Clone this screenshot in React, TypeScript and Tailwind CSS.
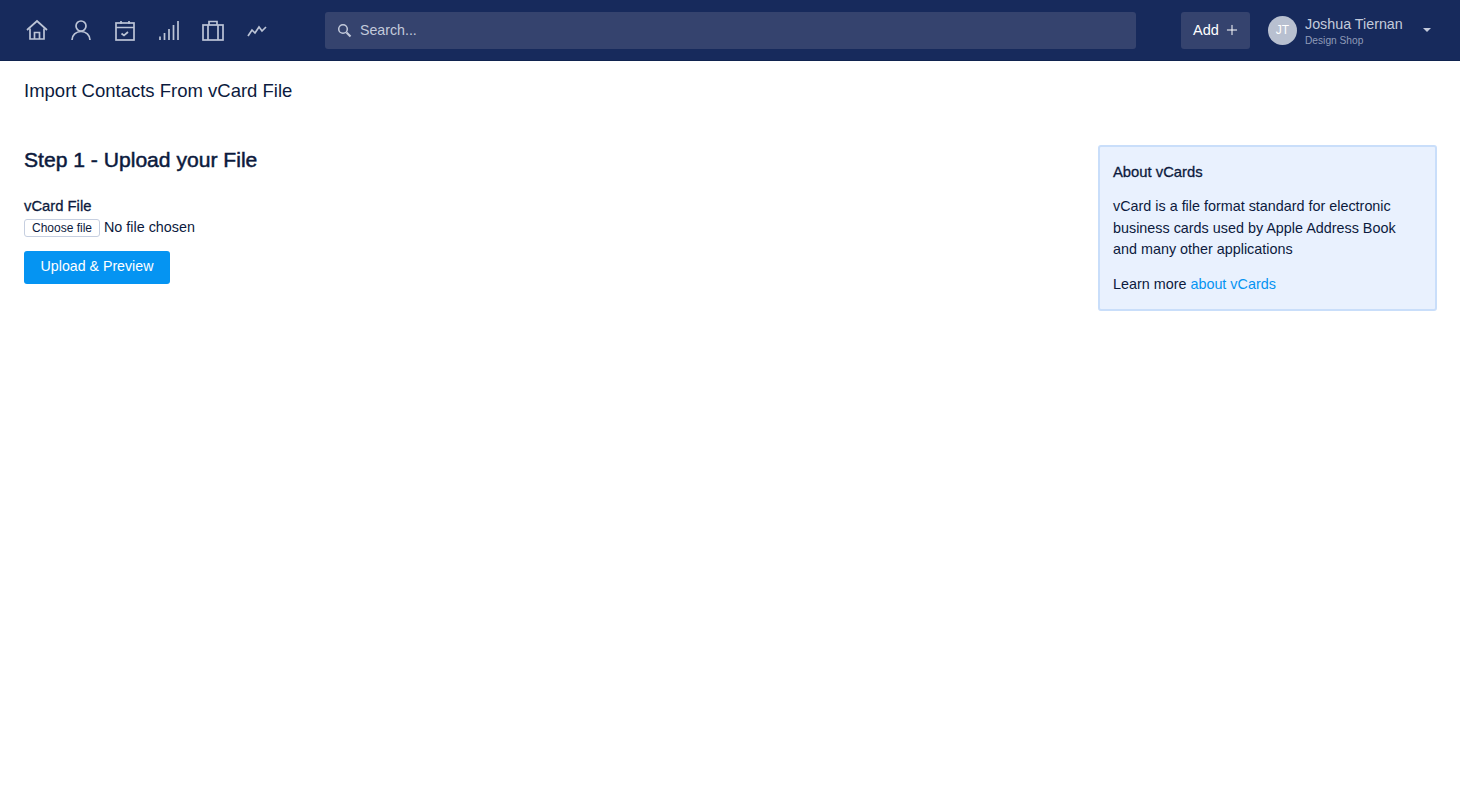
import React from "react";
import { Plus } from "lucide-react";

const NavIcon: React.FC<{ children: React.ReactNode }> = ({ children }) => (
  <a className="flex w-[44px] justify-center text-[#bcc4d6]">
    <svg width="24" height="24" viewBox="0 0 24 24" fill="none" stroke="currentColor" strokeWidth="1.7" strokeLinecap="butt" strokeLinejoin="miter">
      {children}
    </svg>
  </a>
);

const Nav = () => (
  <header className="flex h-[61px] items-center border-b border-[#10234f] bg-[#172a5c] pl-[15px] pr-[22px]">
    <nav className="flex w-[288px] items-center">
      <NavIcon>
        <path d="M2 12 12 3l10 9" />
        <path d="M5 10.500V21h14V10.500" />
        <path d="M9.500 21v-6.500h5V21" />
      </NavIcon>
      <NavIcon>
        <circle cx="12" cy="8" r="5" />
        <path d="M3 22c0-5 4-8.500 9-8.500s9 3.500 9 8.500" />
      </NavIcon>
      <NavIcon>
        <rect x="3" y="5" width="18" height="17" />
        <path d="M3 9.500h18M8 3v3M16 3v3M8.500 15.500l2.500 2 4-3.500" />
      </NavIcon>
      <NavIcon>
        <path d="M3 22v-3.500M7.500 22v-7M12 22V11M16.500 22V7M21 22V3" />
      </NavIcon>
      <NavIcon>
        <rect x="2" y="7" width="20" height="15" />
        <path d="M8 7V3.500h8V7M7 7v15M17 7v15" />
      </NavIcon>
      <NavIcon>
        <path d="m3 18 4-6 3 3 4-6 3 4 4-4" />
      </NavIcon>
    </nav>
    <div className="ml-[22px] flex h-[37px] w-[811px] items-center rounded-[3px] bg-[#35436e] pl-[12px]">
      <svg width="15" height="15" viewBox="0 0 15 15" fill="none" stroke="#c3cadb">
        <circle cx="6" cy="6" r="4.300" strokeWidth="1.500" />
        <path d="m9.500 9.500 4 4" strokeWidth="2.200" />
      </svg>
      <span className="ml-[8px] pt-[2px] text-[14.200px] text-[#c3cadb]">Search...</span>
    </div>
    <button className="ml-[45px] flex h-[37px] w-[69px] items-center justify-center gap-[5px] rounded-[3px] bg-[#35436e] pl-[2px] text-[14.500px] text-white">
      <span className="pt-[2px]">Add</span> <Plus size={16} strokeWidth={1.5} />
    </button>
    <div className="ml-[18px] flex h-[29px] w-[29px] items-center justify-center rounded-full bg-[#b8c0d0] text-[12px] text-white">
      JT
    </div>
    <div className="ml-[8px] flex w-[118px] flex-col pt-[3px]">
      <span className="text-[14.300px] leading-[17px] text-[#c3cadb]">Joshua Tiernan</span>
      <span className="mt-[1px] text-[10.200px] leading-[13px] text-[#8f9bb8]">Design Shop</span>
    </div>
    <div className="h-0 w-0 border-x-[4px] border-t-[4px] border-x-transparent border-t-[#c3cadb]" />
  </header>
);

export default function App() {
  return (
    <div className="min-h-[808px] bg-white font-['Liberation_Sans',Arial,sans-serif] text-[14.360px] text-[#0c1a3d]">
      <Nav />
      <main className="pl-[24px] pr-[23px]">
        <h1 className="mt-[19px] text-[18.500px] leading-[22px]">Import Contacts From vCard File</h1>
        <div className="flex justify-between">
          <section className="pt-[39px]">
            <h2 className="mt-[5px] text-[21.100px] leading-[28px] [-webkit-text-stroke:0.5px]">Step 1 - Upload your File</h2>
            <label className="mt-[23px] block text-[14.800px] leading-[18px] [-webkit-text-stroke:0.3px]">vCard File</label>
            <div className="mt-[2px] flex items-center">
              <button className="h-[18px] w-[76px] rounded-[3px] border border-[#c6cfe0] bg-white text-[12px] leading-none">Choose file</button>
              <span className="ml-[4px]">No file chosen</span>
            </div>
            <button className="mt-[12px] h-[33px] w-[146px] rounded-[3px] bg-[#0594f2] text-[14.200px] text-white">Upload &amp; Preview</button>
          </section>
          <aside className="mt-[43px] h-[166px] w-[339px] rounded-[3px] border-2 border-[#c9defa] bg-[#e9f1fe] px-[13px] pt-[16px]">
            <h3 className="text-[14.800px] leading-[18px] [-webkit-text-stroke:0.3px]">About vCards</h3>
            <p className="mt-[15px] leading-[21.500px]">
              vCard is a file format standard for electronic business cards used by Apple Address Book and many other applications
            </p>
            <p className="mt-[13px] leading-[21px]">
              Learn more <a className="text-[#0594f2]">about vCards</a>
            </p>
          </aside>
        </div>
      </main>
    </div>
  );
}
